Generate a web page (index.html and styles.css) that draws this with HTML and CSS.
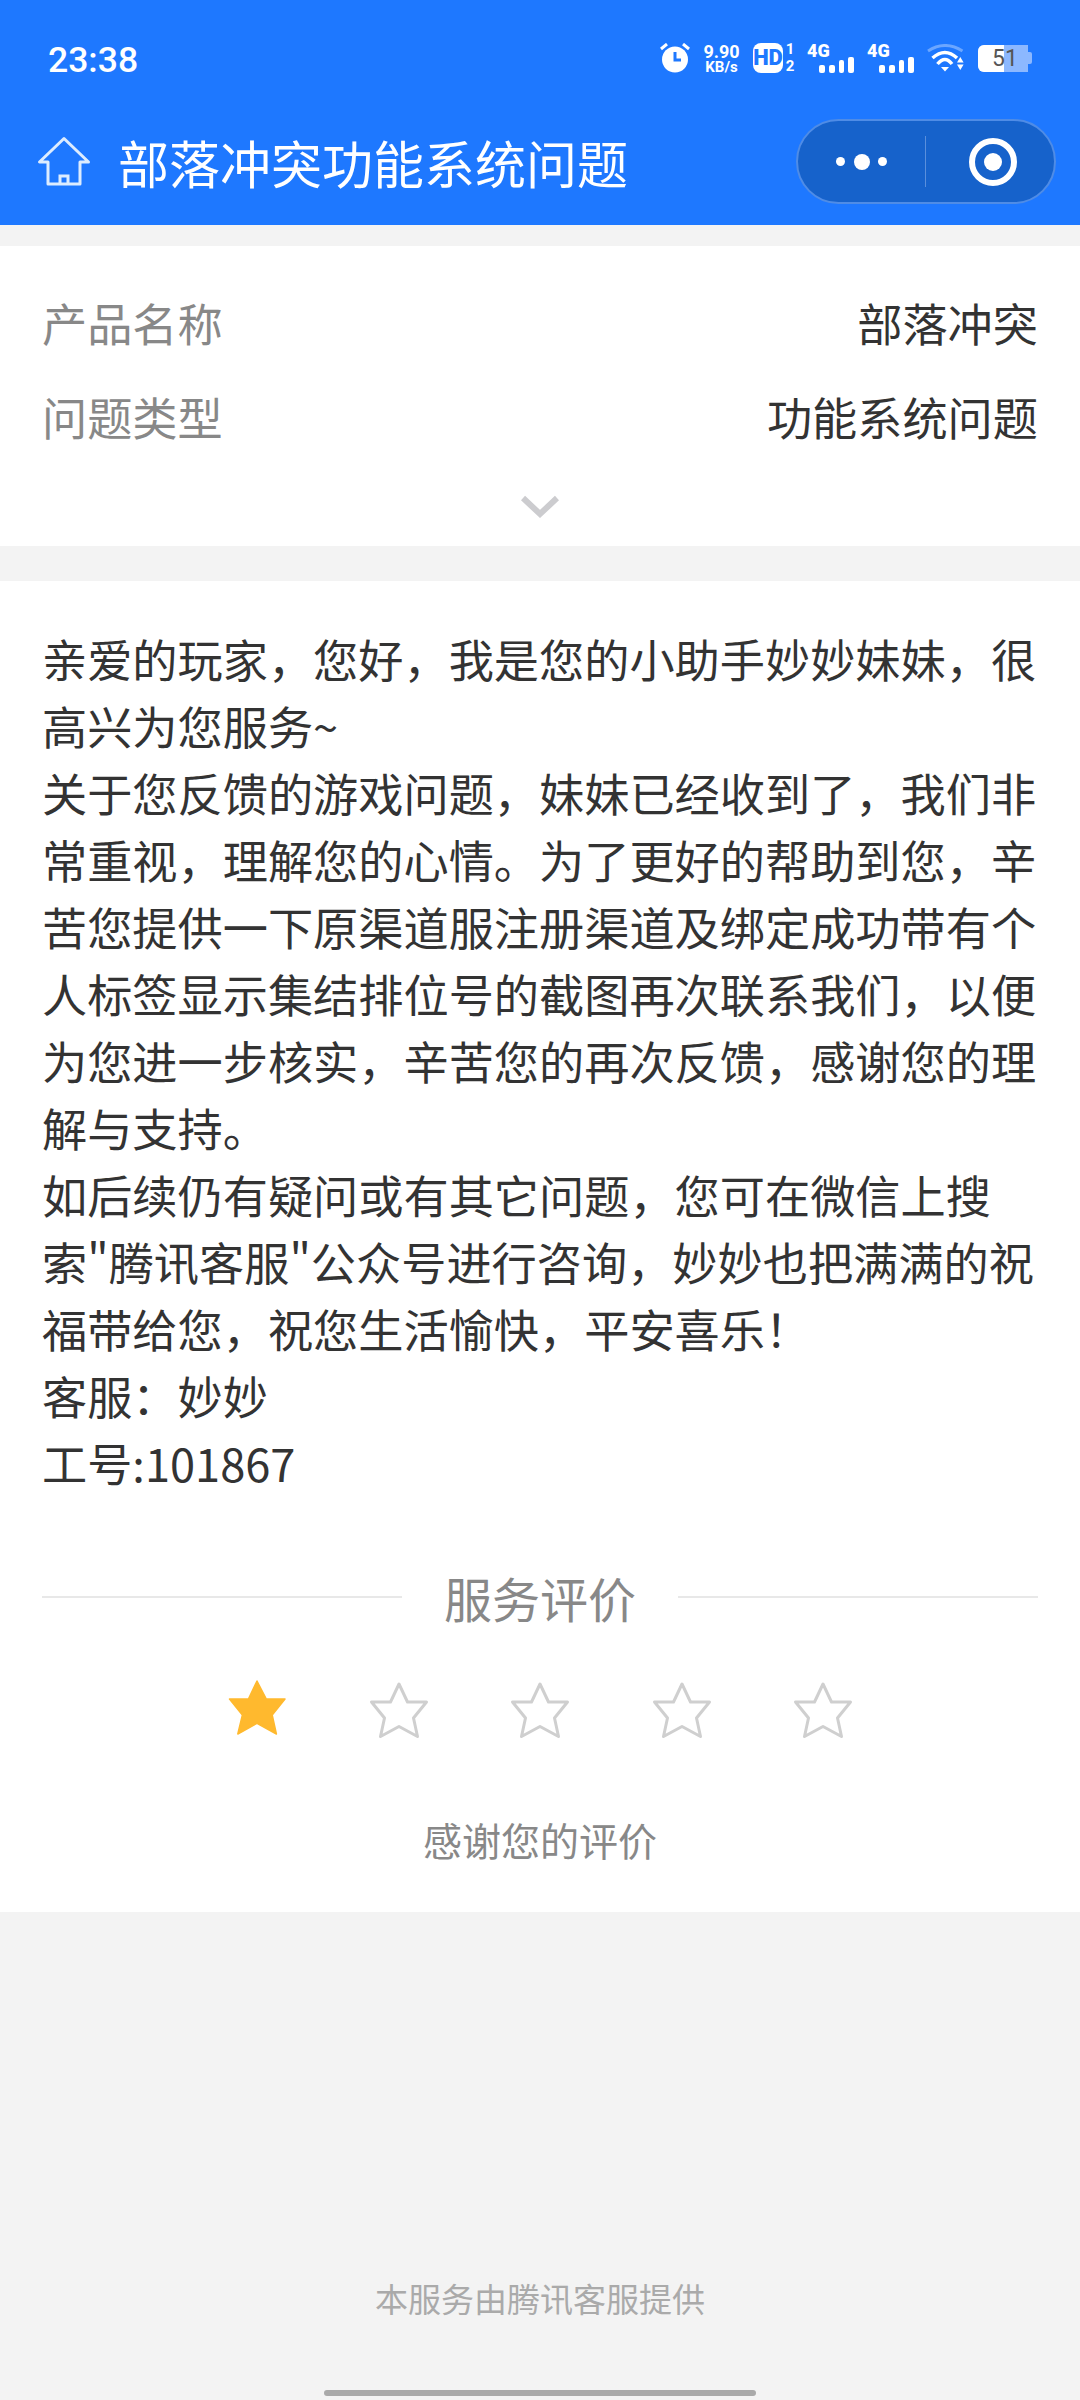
FILE: index.html
```html
<!DOCTYPE html>
<html lang="zh-CN">
<head>
    <meta charset="UTF-8">
    <meta name="viewport" content="width=device-width, initial-scale=1.0">
    <title>部落冲突功能系统问题</title>
    <link rel="stylesheet" href="styles.css">
</head>
<body>

    <!-- Header -->
    <div class="header">
        <div class="status-bar">
            <span class="time">23:38</span>
            <div class="status-icons">
                <svg class="alarm" width="30" height="30" viewBox="0 0 30 30">
                    <circle cx="15" cy="16.5" r="13" fill="#fff"/>
                    <path d="M15 9v8h6" fill="none" stroke="#1e78ff" stroke-width="3"/>
                    <path d="M1 6l6-5M29 6l-6-5" stroke="#fff" stroke-width="3"/>
                </svg>
                <div class="speed"><span class="speed-num">9.90</span><span class="speed-unit">KB/s</span></div>
                <span class="hd">HD</span>
                <div class="sim-num"><span>1</span><span>2</span></div>
                <div class="signal">
                    <span class="signal-label">4G</span>
                    <div class="bars"><i class="b1"></i><i class="b2"></i><i class="b3"></i><i class="b4"></i></div>
                </div>
                <div class="signal">
                    <span class="signal-label">4G</span>
                    <div class="bars"><i class="b1"></i><i class="b2"></i><i class="b3"></i><i class="b4"></i></div>
                </div>
                <svg class="wifi" width="37" height="28" viewBox="0 0 37 28">
                    <path d="M1 7Q18 -4 35.5 7" fill="none" stroke="#6ba6ff" stroke-width="3"/>
                    <path d="M5.5 14Q18 3 30 14M10.5 20Q18 11 25 20" fill="none" stroke="#fff" stroke-width="3.5"/>
                    <path d="M14 23h8l-4 4.5z" fill="#fff"/>
                    <path d="M33.3 13l3.3 5.500h-6.600zM33.3 26l3.300-5.500h-6.600z" fill="#fff"/>
                </svg>
                <div class="battery">
                    <div class="battery-fill"></div>
                    <span class="battery-num">51</span>
                </div>
                <span class="battery-tip"></span>
            </div>
        </div>
        <div class="nav-bar">
            <svg class="home" width="54" height="52" viewBox="0 0 54 52">
                <path d="M27 2.5L2.5 26H11V48H43V26H51.5z" fill="none" stroke="#dcecff" stroke-width="3" stroke-linejoin="round"/>
                <path d="M23 48V40h8v8" fill="none" stroke="#dcecff" stroke-width="3"/>
            </svg>
            <span class="nav-title">部落冲突功能系统问题</span>
            <div class="capsule">
                <div class="capsule-left"><i class="dot"></i><i class="dot big"></i><i class="dot"></i></div>
                <div class="capsule-right"><span class="target"></span></div>
            </div>
        </div>
    </div>

    <!-- Product info -->
    <div class="card info-card">
        <div class="info-row"><span class="info-label">产品名称</span><span>部落冲突</span></div>
        <div class="info-row"><span class="info-label">问题类型</span><span>功能系统问题</span></div>
        <div class="expand">
            <svg width="38" height="24" viewBox="0 0 38 24">
                <path d="M2 3l17 16L36 3" fill="none" stroke="#cccccf" stroke-width="6"/>
            </svg>
        </div>
    </div>

    <!-- Reply -->
    <div class="card reply-card">
        <p class="reply">亲爱的玩家，您好，我是您的小助手妙妙妹妹，很高兴为您服务~<br>关于您反馈的游戏问题，妹妹已经收到了，我们非常重视，理解您的心情。为了更好的帮助到您，辛苦您提供一下原渠道服注册渠道及绑定成功带有个人标签显示集结排位号的截图再次联系我们，以便为您进一步核实，辛苦您的再次反馈，感谢您的理解与支持。<br>如后续仍有疑问或有其它问题，您可在微信上搜索"腾讯客服"公众号进行咨询，妙妙也把满满的祝福带给您，祝您生活愉快，平安喜乐！<br>客服：妙妙<br>工号:101867</p>

        <div class="rate-title"><span>服务评价</span></div>
        <div class="stars">
            <svg width="60" height="62" viewBox="0 0 60 62"><path class="star-on" d="M30 3L39.3 21H58L45.2 37 49.4 56 30 45.3 10.800 56 15.400 37 2.500 21H21.400Z"/></svg>
            <svg width="60" height="62" viewBox="0 0 60 62"><path class="star-off" d="M30 6L38.500 24H57.500L44.500 40 48.500 58.500 30 48.500 11.500 58.500 15.500 40 2.500 24H21.500Z"/></svg>
            <svg width="60" height="62" viewBox="0 0 60 62"><path class="star-off" d="M30 6L38.500 24H57.500L44.500 40 48.500 58.500 30 48.500 11.500 58.500 15.500 40 2.500 24H21.500Z"/></svg>
            <svg width="60" height="62" viewBox="0 0 60 62"><path class="star-off" d="M30 6L38.500 24H57.500L44.500 40 48.500 58.500 30 48.500 11.500 58.500 15.500 40 2.500 24H21.500Z"/></svg>
            <svg width="60" height="62" viewBox="0 0 60 62"><path class="star-off" d="M30 6L38.500 24H57.500L44.500 40 48.500 58.500 30 48.500 11.500 58.500 15.500 40 2.500 24H21.500Z"/></svg>
        </div>
        <p class="thanks">感谢您的评价</p>
    </div>

    <div class="footer">
        <p class="provider">本服务由腾讯客服提供</p>
        <div class="gesture-bar"></div>
    </div>

</body>
</html>
```

FILE: styles.css
```css
* {
    box-sizing: border-box;
}
html, body {
    height: 100%;
}
body {
    font-family: "Noto Sans CJK SC", "Noto Sans", sans-serif;
    background-color: #f3f3f3;
    color: #333;
    margin: 0;
    display: flex;
    flex-direction: column;
}
p {
    margin: 0;
}
.header {
    background-color: #1e78ff;
    color: #fff;
    height: 225px;
    margin-bottom: 21px;
}
.status-bar {
    height: 118px;
    padding: 0 48px;
    display: flex;
    align-items: center;
    justify-content: space-between;
}
.time {
    font-family: Roboto, sans-serif;
    font-weight: 500;
    font-size: 35.5px;
    padding-top: 2px;
}
.status-icons {
    display: flex;
    align-items: center;
    margin-bottom: 2px;
}
.alarm {
    margin-right: 14px;
}
.speed {
    font-family: Roboto, sans-serif;
    font-weight: 700;
    display: flex;
    flex-direction: column;
    align-items: center;
    width: 35px;
    margin-right: 14px;
}
.speed-num {
    font-size: 18px;
    line-height: 18px;
}
.speed-unit {
    font-size: 15px;
    line-height: 12px;
}
.hd {
    font-family: Roboto, sans-serif;
    font-weight: 900;
    font-size: 22px;
    line-height: 30px;
    width: 30px;
    height: 30px;
    text-align: center;
    color: #1e78ff;
    background-color: #fff;
    border-radius: 8px;
    margin-right: 2px;
}
.sim-num {
    font-family: Roboto, sans-serif;
    font-weight: 700;
    font-size: 15px;
    line-height: 15px;
    display: flex;
    flex-direction: column;
    justify-content: space-between;
    align-items: center;
    width: 10px;
    height: 32px;
    margin-right: 12px;
}
.signal {
    width: 47px;
    height: 29px;
    margin-right: 13px;
    display: flex;
    flex-direction: column;
}
.signal-label {
    font-family: Roboto, sans-serif;
    font-weight: 900;
    font-size: 18px;
    line-height: 13px;
}
.bars {
    height: 16px;
    display: flex;
    align-items: flex-end;
    justify-content: flex-end;
    gap: 4px;
}
.bars i {
    width: 5.7px;
    background-color: #fff;
    border-radius: 2px;
}
.b1, .b2 {
    height: 8px;
}
.b3 {
    height: 13px;
}
.b4 {
    height: 16px;
}
.wifi {
    margin-right: 14px;
}
.battery {
    width: 50px;
    height: 27px;
    background-color: #8cb8ff;
    border-radius: 6px 0 0 6px;
    position: relative;
    overflow: hidden;
}
.battery-fill {
    width: 26px;
    height: 100%;
    background-color: #fff;
}
.battery-num {
    position: absolute;
    left: 14px;
    top: 0;
    font-family: Roboto, sans-serif;
    font-size: 23px;
    line-height: 27px;
    color: #555;
}
.battery-tip {
    width: 4px;
    height: 12px;
    background-color: #8cb8ff;
    border-radius: 0 2px 2px 0;
}
.nav-bar {
    height: 87px;
    padding: 0 24px 0 37px;
    display: flex;
    align-items: center;
}
.home {
    margin-right: 27px;
}
.nav-title {
    font-size: 51px;
    flex: 1;
}
.capsule {
    width: 260px;
    height: 85px;
    flex-shrink: 0;
    background-color: #1662cb;
    border: 2px solid #4f8ce6;
    border-radius: 43px;
    display: flex;
    align-items: center;
}
.capsule-left {
    width: 128px;
    height: 51px;
    border-right: 1px solid #5a8fdc;
    display: flex;
    align-items: center;
    justify-content: center;
    gap: 8.5px;
}
.dot {
    width: 9px;
    height: 9px;
    border-radius: 50%;
    background-color: #fff;
}
.dot.big {
    width: 16px;
    height: 16px;
}
.capsule-right {
    flex: 1;
    padding-left: 5px;
    display: flex;
    justify-content: center;
}
.target {
    width: 48px;
    height: 48px;
    border: 6px solid #fff;
    border-radius: 50%;
    display: flex;
    align-items: center;
    justify-content: center;
}
.target::after {
    content: "";
    width: 18px;
    height: 18px;
    border-radius: 50%;
    background-color: #fff;
}
.card {
    background-color: #fff;
    padding: 0 42px;
}
.info-card {
    height: 300px;
    padding-top: 30px;
    margin-bottom: 35px;
}
.info-row {
    display: flex;
    justify-content: space-between;
    font-size: 45.2px;
    line-height: 94px;
}
.info-label {
    color: #888;
}
.expand {
    display: flex;
    justify-content: center;
    padding-top: 31px;
}
.reply-card {
    height: 1331px;
    padding-top: 44px;
}
.reply {
    font-size: 45.2px;
    line-height: 67px;
}
.rate-title {
    display: flex;
    align-items: center;
    gap: 42px;
    margin-top: 66px;
    font-size: 48px;
    line-height: 70px;
    color: #888;
}
.rate-title::before, .rate-title::after {
    content: "";
    flex: 1;
    height: 2px;
    background-color: #e8e8e8;
}
.stars {
    display: flex;
    justify-content: center;
    gap: 81.5px;
    margin-top: 46px;
}
.star-on {
    fill: #ffb92e;
    stroke: #ffb92e;
    stroke-width: 1.5;
    stroke-linejoin: round;
}
.star-off {
    fill: none;
    stroke: #cfcfcf;
    stroke-width: 3;
    stroke-linejoin: round;
}
.thanks {
    text-align: center;
    font-size: 39px;
    color: #888;
    margin-top: 71px;
}
.footer {
    flex: 1;
    display: flex;
    flex-direction: column;
    align-items: center;
    justify-content: flex-end;
}
.provider {
    font-size: 33px;
    color: #aaa;
    margin-bottom: 68px;
}
.gesture-bar {
    width: 432px;
    height: 6px;
    background-color: #a9a9a9;
    border-radius: 3px;
    margin-bottom: 4px;
}
```
